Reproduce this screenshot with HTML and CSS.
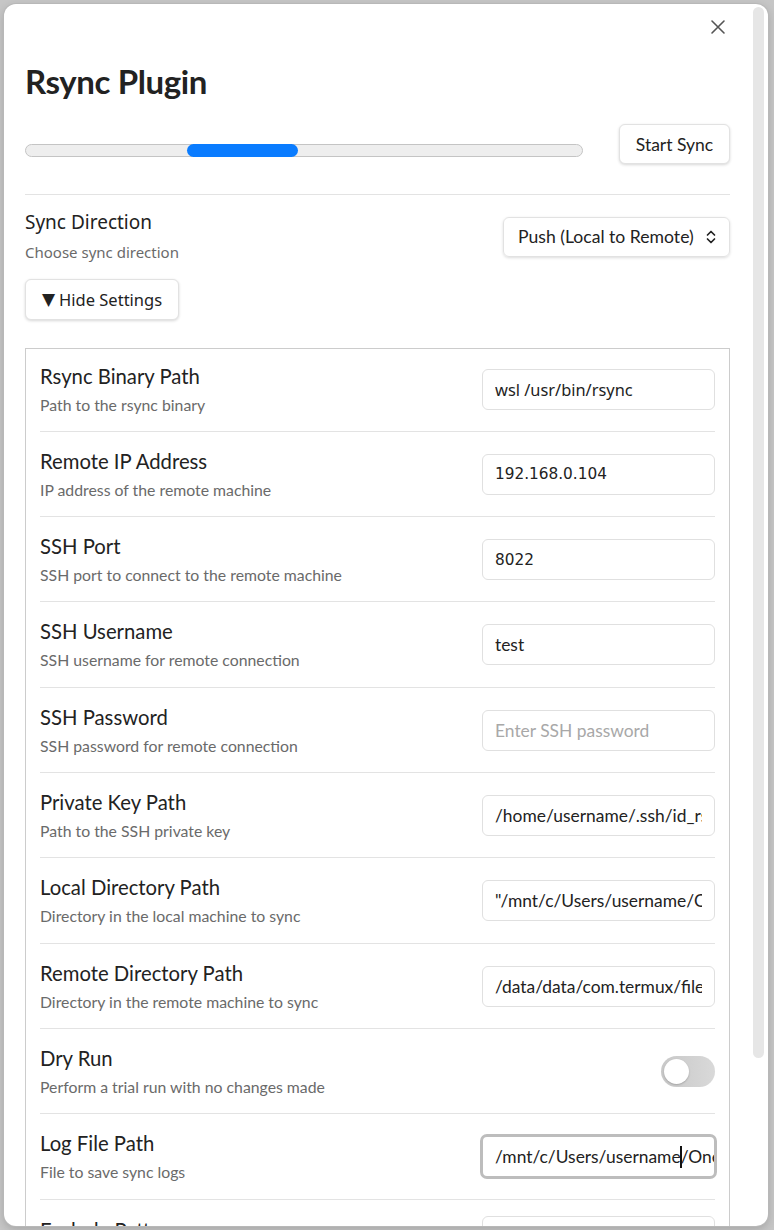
FILE: index.html
```html
<!DOCTYPE html>
<html lang="en">
<head>
<meta charset="utf-8">
<title>Rsync Plugin</title>
<link rel="stylesheet" href="styles.css">
</head>
<body>
<div class="modal">
  <div class="modal-body">
    <button class="close" aria-label="Close">
      <svg width="16" height="16" viewBox="0 0 16 16"><path d="M2 2 L14 14 M14 2 L2 14" stroke="#555" stroke-width="1.6" stroke-linecap="round" fill="none"/></svg>
    </button>
    <h1 class="title">Rsync Plugin</h1>
    <div class="sync-row">
      <div class="progress"><div class="progress-fill" style="margin-left:161px;width:111px"></div></div>
      <button class="btn start-btn">Start Sync</button>
    </div>
    <div class="direction">
      <div class="info">
        <div class="name noto">Sync Direction</div>
        <div class="desc noto">Choose sync direction</div>
      </div>
      <div class="select">Push (Local to Remote)
        <svg width="12" height="16" viewBox="0 0 12 16"><path d="M2.5 6 L6 2.5 L9.5 6 M2.5 10 L6 13.5 L9.5 10" stroke="#222" stroke-width="1.7" fill="none" stroke-linecap="round" stroke-linejoin="round"/></svg>
      </div>
    </div>
    <button class="btn hide-btn noto"><span class="tri">▼</span><span>Hide Settings</span></button>
    <div class="settings-box">
      <div class="row">
        <div class="info"><div class="name">Rsync Binary Path</div><div class="desc">Path to the rsync binary</div></div>
        <input class="text-input noto" type="text" value="wsl /usr/bin/rsync">
      </div>
      <div class="row">
        <div class="info"><div class="name">Remote IP Address</div><div class="desc">IP address of the remote machine</div></div>
        <input class="text-input mono" type="text" value="192.168.0.104">
      </div>
      <div class="row">
        <div class="info"><div class="name">SSH Port</div><div class="desc">SSH port to connect to the remote machine</div></div>
        <input class="text-input mono" type="text" value="8022">
      </div>
      <div class="row">
        <div class="info"><div class="name">SSH Username</div><div class="desc">SSH username for remote connection</div></div>
        <input class="text-input" type="text" value="test">
      </div>
      <div class="row">
        <div class="info"><div class="name">SSH Password</div><div class="desc">SSH password for remote connection</div></div>
        <input class="text-input" type="password" placeholder="Enter SSH password">
      </div>
      <div class="row">
        <div class="info"><div class="name">Private Key Path</div><div class="desc">Path to the SSH private key</div></div>
        <input class="text-input" type="text" value="/home/username/.ssh/id_rsa">
      </div>
      <div class="row">
        <div class="info"><div class="name">Local Directory Path</div><div class="desc">Directory in the local machine to sync</div></div>
        <input class="text-input" type="text" value="&quot;/mnt/c/Users/username/OneDrive/Documents/Obsidian&quot;">
      </div>
      <div class="row">
        <div class="info"><div class="name">Remote Directory Path</div><div class="desc">Directory in the remote machine to sync</div></div>
        <input class="text-input" type="text" value="/data/data/com.termux/files/home/storage/shared/Obsidian">
      </div>
      <div class="row">
        <div class="info"><div class="name">Dry Run</div><div class="desc">Perform a trial run with no changes made</div></div>
        <div class="toggle"><div class="knob"></div></div>
      </div>
      <div class="row">
        <div class="info"><div class="name">Log File Path</div><div class="desc">File to save sync logs</div></div>
        <div class="text-input focused"><span>/mnt/c/Users/username</span><span class="caret"></span><span>/OneDrive/rsync.log</span></div>
      </div>
      <div class="row">
        <div class="info"><div class="name">Exclude Patterns</div><div class="desc">Patterns to exclude from sync</div></div>
        <textarea class="text-input area"></textarea>
      </div>
    </div>
  </div>
  <div class="scrollbar"><div class="thumb"></div></div>
</div>
</body>
</html>
```
FILE: styles.css
```css
* { box-sizing: border-box; }
html, body { margin: 0; padding: 0; }
body {
  background: #c6c6c6;
  font-family: Lato, "Noto Sans", sans-serif;
  color: #222;
  height: 1230px;
  overflow: hidden;
}
.noto { font-family: "Noto Sans", sans-serif; }

.modal {
  position: relative;
  margin: 4px 0 0 4px;
  width: 764px;
  height: 1222px;
  background: #fff;
  border-radius: 12px;
  overflow: hidden;
  display: flex;
  box-shadow: 0 0 0 1px #b8b8b8, 0 3px 10px rgba(0,0,0,0.18);
}
.modal-body {
  width: 749px;
  padding: 57px 23px 0 21px;
}
.close {
  position: absolute;
  top: 11px;
  left: 702px;
  width: 24px;
  height: 24px;
  padding: 4px;
  border: 0;
  background: none;
  display: flex;
}
.title {
  margin: 0;
  font-size: 33px;
  line-height: 40px;
  font-weight: 700;
  letter-spacing: -0.4px;
  color: #222;
}
.sync-row {
  margin-top: 23px;
  display: flex;
  align-items: flex-start;
  justify-content: space-between;
}
.progress {
  margin-top: 20px;
  width: 558px;
  height: 13px;
  border: 1px solid #c4c4c4;
  border-radius: 7px;
  background: #eeeeee;
  display: flex;
}
.progress-fill {
  height: 13px;
  margin-top: -1px;
  border-radius: 7px;
  background: #0a7cff;
}
.btn {
  font-family: Lato, sans-serif;
  font-size: 17.5px;
  color: #222;
  background: #fff;
  border: 1px solid #e2e2e2;
  border-radius: 6px;
  box-shadow: 0 1px 3px rgba(0,0,0,0.16);
  padding: 0;
  height: 40px;
}
.start-btn { width: 111px; }
.direction {
  margin-top: 30px;
  border-top: 1px solid #e3e3e3;
  padding: 14px 0 0;
  display: flex;
  align-items: center;
  justify-content: space-between;
}
.direction .name { font-size: 19px; line-height: 27px; }
.direction .desc { font-size: 15px; line-height: 24px; margin-top: 4px; }
.select {
  width: 227px;
  height: 40px;
  border: 1px solid #e2e2e2;
  border-radius: 6px;
  box-shadow: 0 1px 3px rgba(0,0,0,0.14);
  display: flex;
  align-items: center;
  justify-content: space-between;
  padding: 0 12px 0 14px;
  font-size: 17.6px;
  color: #222;
}
.hide-btn {
  margin-top: 15px;
  width: 154px;
  height: 41px;
  font-family: "Noto Sans", sans-serif;
  font-size: 16.5px;
  display: flex;
  align-items: center;
  justify-content: flex-start;
  padding-left: 16px;
  gap: 4px;
}
.tri { font-size: 17px; font-family: "DejaVu Sans", sans-serif; line-height: 1; }
.settings-box {
  margin-top: 28px;
  border: 1px solid #cccccc;
  padding: 0 14px;
  width: 705px;
}
.row {
  display: flex;
  align-items: center;
  justify-content: space-between;
  padding: 16px 0 15.33px;
  border-top: 1px solid #e3e3e3;
}
.row:first-child { border-top: 0; padding-top: 13.5px; }
.info { display: flex; flex-direction: column; }
.name { font-size: 20.3px; line-height: 26px; color: #222; }
.desc { font-size: 15.8px; line-height: 22px; color: #6a6a6a; margin-top: 5px; }
.text-input {
  width: 233px;
  height: 41px;
  border: 1px solid #e0e0e0;
  border-radius: 6px;
  padding: 0 12px;
  font-family: Lato, sans-serif;
  font-size: 17.4px;
  color: #222;
  background: #fff;
  outline: none;
}
.text-input.noto { font-family: "Noto Sans", sans-serif; font-size: 16.4px; }
.text-input.mono { font-family: "DejaVu Sans", sans-serif; font-size: 15.3px; }
.text-input::placeholder { color: #a8a8a8; }
.area { height: 56px; resize: none; padding: 10px 12px; }
.focused {
  display: flex;
  align-items: center;
  white-space: nowrap;
  overflow: hidden;
  border: 3px solid #bdbdbd;
  border-radius: 7px;
  width: 237px;
  height: 45px;
  margin-right: -2px;
  padding: 0 12px;
}
.focused > * { flex-shrink: 0; }
.caret {
  display: block;
  width: 2px;
  height: 22px;
  background: #111;
  margin: 0 -1px;
  position: relative;
  z-index: 1;
}
.toggle {
  width: 54px;
  height: 31px;
  border-radius: 16px;
  background: linear-gradient(90deg, #c8c8c8, #d9d9d9);
  padding: 3px;
  display: flex;
}
.knob {
  width: 25px;
  height: 25px;
  border-radius: 50%;
  background: #fff;
  box-shadow: 0 1px 2px rgba(0,0,0,0.2);
}
.scrollbar {
  width: 11px;
  margin-right: 4px;
  padding-top: 3px;
}
.thumb {
  width: 11px;
  height: 1051px;
  border-radius: 6px;
  background: #e6e6e6;
}
```
